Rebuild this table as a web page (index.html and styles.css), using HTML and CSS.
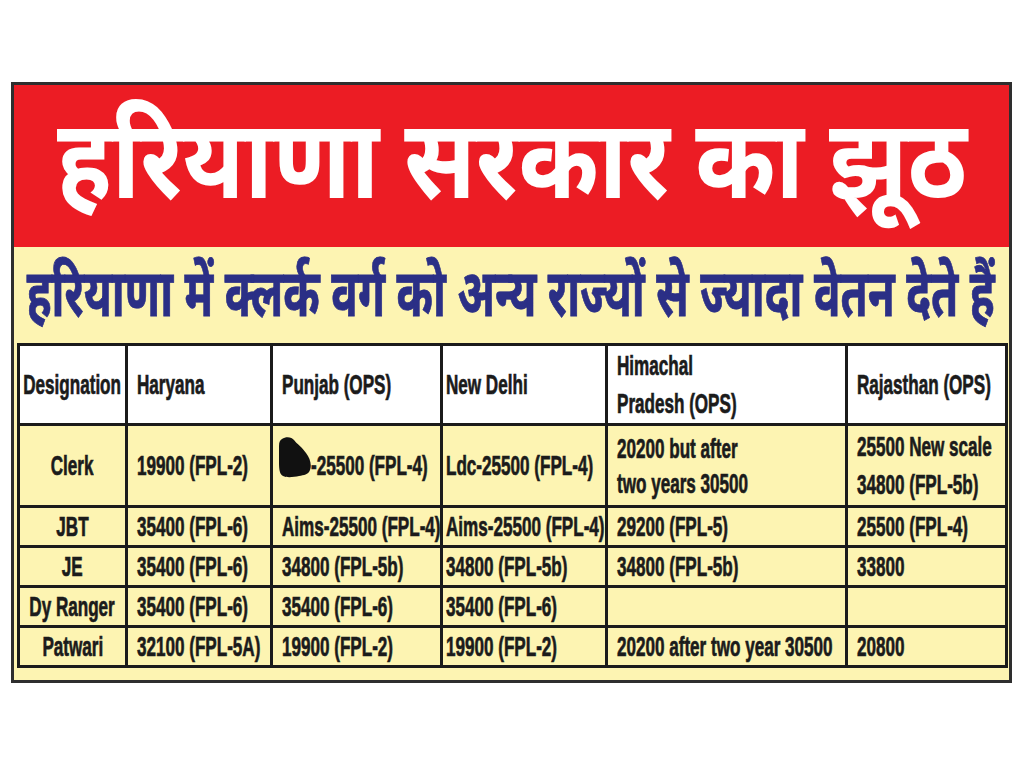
FILE: index.html
```html
<!DOCTYPE html>
<html lang="hi">
<head>
<meta charset="utf-8">
<title>हरियाणा सरकार का झूठ</title>
<link rel="stylesheet" href="styles.css">
</head>
<body>
<div class="poster">
  <div class="banner">
    <h1 class="title"><span class="title-text">हरियाणा सरकार का झूठ</span></h1>
  </div>
  <div class="content">
    <h2 class="subtitle"><span class="subtitle-text">हरियाणा में क्लर्क वर्ग को अन्य राज्यों से ज्यादा वेतन देते हैं</span></h2>
    <table class="pay">
      <colgroup>
        <col class="c1"><col class="c2"><col class="c3"><col class="c4"><col class="c5"><col class="c6">
      </colgroup>
      <thead>
        <tr class="row-head">
          <th class="first"><div class="cell cell-c"><span class="t">Designation</span></div></th>
          <th><div class="cell"><span class="t">Haryana</span></div></th>
          <th><div class="cell"><span class="t">Punjab (OPS)</span></div></th>
          <th class="tight"><div class="cell"><span class="t">New Delhi</span></div></th>
          <th><div class="cell"><span class="t t-multi">Himachal<br>Pradesh (OPS)</span></div></th>
          <th><div class="cell"><span class="t">Rajasthan (OPS)</span></div></th>
        </tr>
      </thead>
      <tbody>
        <tr class="row-tall">
          <td class="first"><div class="cell cell-c"><span class="t">Clerk</span></div></td>
          <td><div class="cell"><span class="t">19900 (FPL-2)</span></div></td>
          <td><div class="cell"><svg class="blob" viewBox="0 0 32 58" width="32" height="58" aria-hidden="true"><path d="M3 2 C7 -1 13 0 15 3 C18 7 23 10 27 16 C31 21 33 28 31 33 C29 38 25 38 20 39 C15 40 8 41 4 39 C0 37 0 30 0 24 L0 9 C0 5 1 3 3 2 Z"/></svg><span class="t">-25500 (FPL-4)</span></div></td>
          <td class="tight"><div class="cell"><span class="t">Ldc-25500 (FPL-4)</span></div></td>
          <td><div class="cell"><span class="t t-multi2">20200 but after<br>two years 30500</span></div></td>
          <td><div class="cell"><span class="t t-multi">25500 New scale<br>34800 (FPL-5b)</span></div></td>
        </tr>
        <tr class="row">
          <td class="first"><div class="cell cell-c"><span class="t">JBT</span></div></td>
          <td><div class="cell"><span class="t">35400 (FPL-6)</span></div></td>
          <td><div class="cell"><span class="t">Aims-25500 (FPL-4)</span></div></td>
          <td class="tight"><div class="cell"><span class="t">Aims-25500 (FPL-4)</span></div></td>
          <td><div class="cell"><span class="t">29200 (FPL-5)</span></div></td>
          <td><div class="cell"><span class="t">25500 (FPL-4)</span></div></td>
        </tr>
        <tr class="row">
          <td class="first"><div class="cell cell-c"><span class="t">JE</span></div></td>
          <td><div class="cell"><span class="t">35400 (FPL-6)</span></div></td>
          <td><div class="cell"><span class="t">34800 (FPL-5b)</span></div></td>
          <td class="tight"><div class="cell"><span class="t">34800 (FPL-5b)</span></div></td>
          <td><div class="cell"><span class="t">34800 (FPL-5b)</span></div></td>
          <td><div class="cell"><span class="t">33800</span></div></td>
        </tr>
        <tr class="row">
          <td class="first"><div class="cell cell-c"><span class="t">Dy Ranger</span></div></td>
          <td><div class="cell"><span class="t">35400 (FPL-6)</span></div></td>
          <td><div class="cell"><span class="t">35400 (FPL-6)</span></div></td>
          <td class="tight"><div class="cell"><span class="t">35400 (FPL-6)</span></div></td>
          <td></td>
          <td></td>
        </tr>
        <tr class="row">
          <td class="first"><div class="cell cell-c"><span class="t">Patwari</span></div></td>
          <td><div class="cell"><span class="t">32100 (FPL-5A)</span></div></td>
          <td><div class="cell"><span class="t">19900 (FPL-2)</span></div></td>
          <td class="tight"><div class="cell"><span class="t">19900 (FPL-2)</span></div></td>
          <td><div class="cell"><span class="t">20200 after two year 30500</span></div></td>
          <td><div class="cell"><span class="t">20800</span></div></td>
        </tr>
      </tbody>
    </table>
  </div>
</div>
</body>
</html>
```

FILE: styles.css
```css
html, body {
  margin: 0;
  padding: 0;
  background: #ffffff;
}

.poster {
  box-sizing: border-box;
  width: 1001px;
  height: 601px;
  margin: 82px 0 0 11px;
  border: 3px solid #2e2e2e;
  background: #fdf4b2;
  display: flex;
  flex-direction: column;
}

.banner {
  box-sizing: border-box;
  height: 162px;
  padding-top: 31px;
  background: #ec1c24;
  display: flex;
  align-items: flex-start;
  justify-content: center;
}

.title {
  margin: 0;
  font-family: "Noto Sans Devanagari", "Noto Sans", "Lohit Devanagari", sans-serif;
  font-weight: 700;
  font-size: 110px;
  line-height: 110px;
  color: #ffffff;
  white-space: nowrap;
  display: flex;
  justify-content: center;
}

.title-text {
  display: inline-block;
  flex: none;
  transform: scaleX(0.88);
  transform-origin: center center;
}

.content {
  flex: 1;
  padding: 0 4px 0 3px;
  display: flex;
  flex-direction: column;
}

.subtitle {
  box-sizing: border-box;
  height: 96px;
  margin: 0;
  padding-top: 20px;
  display: flex;
  align-items: flex-start;
  justify-content: center;
  font-family: "Noto Sans Devanagari", "Noto Sans", "Lohit Devanagari", sans-serif;
  font-weight: 700;
  font-size: 66px;
  line-height: 66px;
  color: #2b2f86;
  -webkit-text-stroke: 0.8px #2b2f86;
  white-space: nowrap;
}

.subtitle-text {
  display: inline-block;
  flex: none;
  transform: scaleX(0.667);
  transform-origin: center center;
}

.pay {
  width: 988px;
  border-collapse: collapse;
  table-layout: fixed;
}

.c1 { width: 108px; }
.c2 { width: 145px; }
.c3 { width: 170px; }
.c4 { width: 165px; }
.c5 { width: 240px; }
.c6 { width: 160px; }

.pay th,
.pay td {
  border: 3px solid #1b1b1b;
  padding: 0 0 0 9px;
  font-family: "Liberation Sans", Arial, sans-serif;
  font-weight: 700;
  font-size: 28px;
  color: #1b1b1b;
  -webkit-text-stroke: 0.7px #1b1b1b;
  text-align: left;
  vertical-align: middle;
  overflow: visible;
}

.pay th {
  background: #ffffff;
}

.pay .first {
  padding: 0;
}

.pay .tight {
  padding-left: 3px;
}

.row-head { height: 80px; }
.row-tall { height: 82px; }
.row { height: 40px; }

.cell {
  display: flex;
  align-items: center;
}

.cell-c {
  justify-content: center;
}

.t {
  display: inline-block;
  flex: none;
  white-space: nowrap;
  line-height: 34px;
  transform: scaleX(0.61);
  transform-origin: left center;
}

.cell-c .t {
  transform-origin: center center;
}

.t-multi { line-height: 38px; }
.t-multi2 { line-height: 35px; }

.blob {
  flex: none;
  width: 32px;
  height: 58px;
  margin-left: -3px;
  fill: #111111;
}
```
